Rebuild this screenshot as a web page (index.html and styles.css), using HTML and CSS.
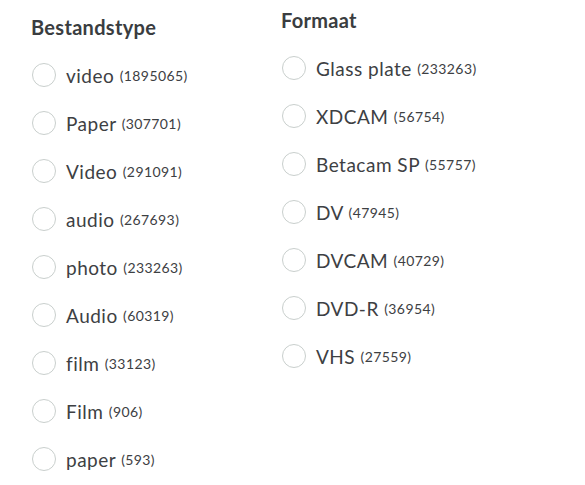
FILE: index.html
```html
<!DOCTYPE HTML>
<html lang="nl">
<head>
    <meta charset="UTF-8">
    <title>Filters</title>
    <link rel="stylesheet" href="styles.css">
</head>
<body>

    <div class="filters">
        <!-- Bestandstype -->
        <div class="facet facet-type">
            <h3>Bestandstype</h3>
            <ul>
                <li><span class="radio"></span>video <small>(1895065)</small></li>
                <li><span class="radio"></span>Paper <small>(307701)</small></li>
                <li><span class="radio"></span>Video <small>(291091)</small></li>
                <li><span class="radio"></span>audio <small>(267693)</small></li>
                <li><span class="radio"></span>photo <small>(233263)</small></li>
                <li><span class="radio"></span>Audio <small>(60319)</small></li>
                <li><span class="radio"></span>film <small>(33123)</small></li>
                <li><span class="radio"></span>Film <small>(906)</small></li>
                <li><span class="radio"></span>paper <small>(593)</small></li>
            </ul>
        </div>

        <!-- Formaat -->
        <div class="facet facet-format">
            <h3>Formaat</h3>
            <ul>
                <li><span class="radio"></span>Glass plate <small>(233263)</small></li>
                <li><span class="radio"></span>XDCAM <small>(56754)</small></li>
                <li><span class="radio"></span>Betacam SP <small>(55757)</small></li>
                <li><span class="radio"></span>DV <small>(47945)</small></li>
                <li><span class="radio"></span>DVCAM <small>(40729)</small></li>
                <li><span class="radio"></span>DVD-R <small>(36954)</small></li>
                <li><span class="radio"></span>VHS <small>(27559)</small></li>
            </ul>
        </div>
    </div>

</body>
</html>
```

FILE: styles.css
```css
body {
    margin: 0;
    background: #fff;
    color: #3d4043;
    font-family: Lato, "Open Sans", sans-serif;
}
.filters {
    display: flex;
    padding-left: 31px;
}
.facet {
    width: 250px;
}
.facet-type {
    padding-top: 15px;
}
.facet-format {
    padding-top: 8px;
}
h3 {
    margin: 0 0 12px 0;
    font-size: 20px;
    font-weight: bold;
    line-height: 24px;
    letter-spacing: 0.3px;
    color: #3a3d40;
}
ul {
    list-style: none;
    margin: 0;
    padding: 0;
}
li {
    display: flex;
    align-items: center;
    height: 48px;
    font-size: 19px;
    letter-spacing: 0.5px;
    white-space: pre;
}
li small {
    font-size: 14px;
    letter-spacing: 0.4px;
}
.radio {
    width: 22px;
    height: 22px;
    border: 1px solid #c9cfcd;
    border-radius: 50%;
    margin-left: 1px;
    margin-right: 10px;
    flex-shrink: 0;
}
```
